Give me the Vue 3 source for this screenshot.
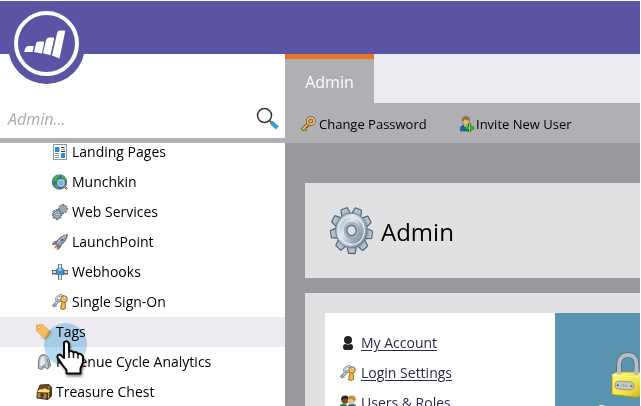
<script setup>
const items = [
  { t: 'Landing Pages', i: 'page' },
  { t: 'Munchkin', i: 'globe' },
  { t: 'Web Services', i: 'gears' },
  { t: 'LaunchPoint', i: 'rocket' },
  { t: 'Webhooks', i: 'hook' },
  { t: 'Single Sign-On', i: 'keys' },
  { t: 'Tags', i: 'tag', top: true, active: true },
  { t: 'Revenue Cycle Analytics', i: 'rca', top: true },
  { t: 'Treasure Chest', i: 'chest', top: true },
]
const links = [
  { t: 'My Account', i: 'person' },
  { t: 'Login Settings', i: 'keys' },
  { t: 'Users & Roles', i: 'users' },
]
const teeth = Array.from({ length: 9 }, (_, n) => n * 40 + 28)
const smallTeeth = Array.from({ length: 8 }, (_, n) => n * 45)
</script>

<template>
  <svg class="defs" aria-hidden="true">
    <defs>
      <linearGradient id="steel" x1="0" y1="0" x2="1" y2="1">
        <stop offset="0" stop-color="#93a4b2" /><stop offset=".35" stop-color="#e2e9ee" />
        <stop offset=".6" stop-color="#afbdc9" /><stop offset="1" stop-color="#64788c" />
      </linearGradient>
      <linearGradient id="toothfill" x1="0" y1="0" x2="0" y2="1">
        <stop offset="0" stop-color="#c6d3dc" /><stop offset="1" stop-color="#8b9fb0" />
      </linearGradient>
      <linearGradient id="yellow" x1="0" y1="0" x2="1" y2="1">
        <stop offset="0" stop-color="#fff680" /><stop offset=".6" stop-color="#f3e448" /><stop offset="1" stop-color="#c9b01c" />
      </linearGradient>
    </defs>
    <symbol id="page" viewBox="0 0 16 16">
      <rect x="1.500" y=".5" width="13" height="15" fill="#fff" stroke="#8d99a6" />
      <path d="M3 3h4.500v5H3zM9 9h4v5H9z" fill="#248fd6" />
      <path d="M9 3.500h3.500M9 7.500h4" stroke="#333" />
      <path d="M9 5.500h4M3 11.500h4" stroke="#c58a72" />
      <path d="M3 9.500h4M3 13.500h4" stroke="#69a577" />
    </symbol>
    <symbol id="globe" viewBox="0 0 16 16">
      <circle cx="7.500" cy="8" r="7.300" fill="#2873b4" stroke="#285983" stroke-width=".6" />
      <path d="M2 3Q5 0 9 1L7 3 5 4 6 6 3 8 1 7zM10 1q4 1 5 6l-3-1-2-3zM2 10l3 1 2 4q-4-1-5-5z" fill="#51a83b" />
      <path d="M11 11l4 4" stroke="#845c29" stroke-width="2.200" /><path d="M11 11l3.600 3.600" stroke="#efbd68" stroke-width="1" />
      <circle cx="9" cy="9" r="3.300" fill="#75b2dc" stroke="#d7e5ea" stroke-width="1.200" />
      <circle cx="9" cy="9" r="4" fill="none" stroke="#4c6776" stroke-width=".4" />
    </symbol>
    <symbol id="gears" viewBox="0 0 16 16">
      <g v-for="(p, k) in [[11, 5, .9], [5, 10.5, 1]]" :key="k" :transform="`translate(${p[0]} ${p[1]}) scale(${p[2]})`">
        <rect v-for="a in smallTeeth" :key="a" x="-1" y="-5" width="2" height="3" fill="#aebdc8" stroke="#405264" stroke-width=".7" :transform="`rotate(${a})`" />
        <circle r="3.500" fill="#b9c7d1" stroke="#5c6e7e" stroke-width=".8" /><circle r="1.400" fill="#eff4f6" stroke="#4c5c6c" stroke-width=".8" />
      </g>
    </symbol>
    <symbol id="rocket" viewBox="0 0 16 16">
      <path d="M5 7L1.500 8 .5 11l3-1zM9 11l-1 3-3 1.500 1-3.500z" fill="#8c9aa8" stroke="#4b5865" stroke-width=".7" />
      <path d="M4 11l-2.500 4L6 12.500z" fill="#f05b32" />
      <path d="M3.500 10Q7 2 15.500.500 14.500 8 6.500 13z" fill="#8d9dab" stroke="#475665" stroke-width=".9" />
      <path d="M5 9.500Q9 4 14 1.500" stroke="#d5dfe6" stroke-width="1" fill="none" />
      <circle cx="10" cy="6" r="1.300" fill="#386b9a" /><path d="M4 8.500l3.500 4" stroke="#b8604c" stroke-width="1" />
    </symbol>
    <symbol id="hook" viewBox="0 0 16 16">
      <path d="M6 0h4v16H6z" fill="#65727c" /><path d="M7 .5h2v15H7z" fill="#e5e6df" />
      <path d="M0 6h16v4.500H0z" fill="#56636e" /><path d="M.7 7h14.600v2H.7z" fill="#d9ddd9" />
      <path d="M4.500 5.500l3.500-2 4 2v4.500L8.500 12l-4-2z" fill="#3f93cc" stroke="#2c638c" stroke-width=".7" /><path d="M7 1h2v3.500H7zM7.200 11h2v4.500h-2z" fill="#e5e6df" />
      <path d="M5.500 5.700l2.500-1 3 1-3 1.500z" fill="#8bc9ed" />
    </symbol>
    <symbol id="keys" viewBox="0 0 16 16">
      <path d="M7 6L1 12.500" stroke="#56636b" stroke-width="2.800" /><path d="M7 6L1.500 12" stroke="#d3dce0" stroke-width="1.400" />
      <path d="M2.500 10.500l2 2" stroke="#76858d" stroke-width="1.300" />
      <ellipse cx="7.500" cy="4.200" rx="3.500" ry="2.400" transform="rotate(-35 7.500 4.200)" fill="none" stroke="#56636b" stroke-width="2" />
      <ellipse cx="7.500" cy="4.200" rx="3.500" ry="2.400" transform="rotate(-35 7.500 4.200)" fill="none" stroke="#dce3e6" />
      <path d="M10 7.500h3l.5 7L11 15.500 8 14.500l1.500-1L8.500 12l1-1z" fill="#f4bd48" stroke="#825417" stroke-width=".8" />
      <circle cx="12" cy="5" r="3.300" fill="#f4c65c" stroke="#825417" stroke-width=".8" /><circle cx="12.800" cy="3.800" r="1.200" fill="#fff" stroke="#8b6b32" stroke-width=".5" />
    </symbol>
    <symbol id="goldkey" viewBox="0 0 16 16">
      <path d="M9 7l-7 7" stroke="#704715" stroke-width="3.300" /><path d="M3 11l3.500 3.500M5.500 9l2.500 2.500" stroke="#80501a" stroke-width="2" />
      <path d="M9.500 6.500L2.500 13.500" stroke="#f5c660" stroke-width="1.700" /><path d="M3.500 11.500l2.400 2.400" stroke="#f5c660" />
      <circle cx="10.800" cy="5" r="3.300" fill="none" stroke="#704715" stroke-width="3" /><circle cx="10.800" cy="5" r="3.300" fill="none" stroke="#f3cc79" stroke-width="1.600" />
    </symbol>
    <symbol id="tag" viewBox="0 0 16 16">
      <path d="M4 13.500L10 15.500 15.500 11" fill="none" stroke="#ccc" stroke-width="1.300" />
      <path d="M.5 1L6.500.500 15.500 8.500 9 15 .5 7z" fill="#f8bd59" stroke="#e2a248" stroke-width=".8" />
      <circle cx="3" cy="3.500" r="1.200" fill="#fff" stroke="#b98038" stroke-width=".5" />
    </symbol>
    <symbol id="rca" viewBox="0 0 16 16">
      <path d="M2.500 14.500Q1.500 1 7 .500 13.500.500 14.500 12l-3 3-3-2-2.500 2.500z" fill="#b5c0ca" stroke="#5c6873" stroke-width=".9" />
      <path d="M4 12Q4 3 7 2q2 2 2 9z" fill="#e6ecf0" /><path d="M11 5q2 4 1.500 8M9 10l-3 4" stroke="#75838f" fill="none" />
    </symbol>
    <symbol id="chest" viewBox="0 0 16 16">
      <path d="M2 6L4 1l9-.5 2.500 3V12l-3.500 3.500L1 14z" fill="#53361c" stroke="#2b2018" stroke-width=".8" />
      <path d="M4 1.500l8-.5 1.500 3.500-10.500 1z" fill="#704a24" /><path d="M2 7q1-2.500 4-1.500 3-2 5 0l3 .5-1 2.500H2z" fill="#ffe46a" />
      <path d="M1 8.500l10 1V15L1 13.500z" fill="#8f602a" stroke="#39281a" stroke-width=".6" /><path d="M3 9v5M9 9.500V15M12.500 9v5M13 2v3" stroke="#d8b25e" stroke-width=".9" />
      <rect x="5" y="9.500" width="2.500" height="3" fill="#36312a" />
    </symbol>
    <symbol id="person" viewBox="0 0 16 16">
      <circle cx="8" cy="5" r="4" fill="#222" /><path d="M3 12q0-3 2.500-3 2.500 1 5 0Q13 9 13 12q0 3-2 3H5q-2 0-2-3z" fill="#222" />
    </symbol>
    <symbol id="invite" viewBox="0 0 16 16">
      <path d="M1.500 15q-1-5 3-6h4q4 1 3 6z" fill="#22659c" stroke="#234665" stroke-width=".6" /><path d="M5 9l2 4 2-4z" fill="#fff" />
      <ellipse cx="7" cy="5" rx="3.300" ry="4.300" fill="#e7bd7d" stroke="#896134" stroke-width=".7" /><path d="M3 6Q1.500 0 7 .2q4 0 4 4.300-4 0-5-1.500Q5 5 3 6z" fill="#96713d" />
      <path d="M10.500 7.500v9M6 12h9" stroke="#137318" stroke-width="3.200" /><path d="M10.500 8v8M6.700 12h7.600" stroke="#74ed42" stroke-width="1.200" />
    </symbol>
    <symbol id="users" viewBox="0 0 16 16">
      <path d="M0 16V10q3-3 7 0v6z" fill="#27834d" /><path d="M8 16v-6q4-3 8 0v6z" fill="#3176ab" />
      <circle cx="5" cy="5" r="3.800" fill="#78472e" /><path d="M1 5Q1 .5 5 .5 9 .5 9 5 5 2 1 5z" fill="#29221f" />
      <circle cx="11.500" cy="5.500" r="3.800" fill="#edc487" /><path d="M8 5Q7 .5 12 .5q4 0 4 5-4 0-5-2z" fill="#bd934c" />
    </symbol>
  </svg>

  <div class="app">
    <header class="top">
      <svg class="logo" viewBox="0 0 80 80">
        <circle cx="40.500" cy="39.500" r="38.500" fill="#5b54a4" />
        <circle cx="40.500" cy="37.500" r="30.500" fill="none" stroke="#fff" stroke-width="4" />
        <g fill="#fff">
          <path d="M18 46l1.500-4q.8-2 3-2H27q1 0 .7 1L26.500 46z" />
          <path d="M28 46l2-8.300q.5-2.200 2.700-2.200h4.600q1 0 .8 1L36 47.500z" />
          <path d="M37 47.200l3-13q.6-2.700 3-2.700h4.200q1.200 0 .9 1.200L44.500 49.300z" />
          <path d="M46 49.500L51 27.500q.6-3 3-3h4.200q1.200 0 .9 1.200L53.500 52.500z" />
        </g>
      </svg>
    </header>
    <div class="main">
      <aside>
        <div class="search">
          <span>Admin...</span>
          <svg viewBox="0 0 24 24"><circle cx="8.500" cy="8.500" r="7" fill="none" stroke="#333" stroke-width="1.500" /><path d="M13 13l3 3" stroke="#333" stroke-width="1.500" /><path d="M15.300 15.300l6 5.700" stroke="#369bd7" stroke-width="4.200" /></svg>
        </div>
        <ul class="tree">
          <li v-for="n in items" :key="n.t" :class="{ root: n.top, active: n.active }">
            <svg class="ic"><use :href="'#' + n.i" /></svg><span>{{ n.t }}</span>
          </li>
        </ul>
      </aside>
      <section class="work">
        <nav class="tabs"><div class="tab">Admin</div></nav>
        <div class="tools">
          <div class="tool"><svg class="ic"><use href="#goldkey" /></svg><span>Change Password</span></div>
          <div class="tool invite"><svg class="ic"><use href="#invite" /></svg><span>Invite New User</span></div>
        </div>
        <div class="canvas">
          <div class="title">
            <svg viewBox="0 0 44 48">
              <g transform="translate(22.500 23.500) rotate(-8) scale(.98 1.080)">
                <path v-for="a in teeth" :key="a" d="M-5-14L-3.300-21.300H3.300L5-14z" fill="url(#toothfill)" stroke="#526577" stroke-width="1.200" stroke-linejoin="round" :transform="`rotate(${a})`" />
                <circle r="16" fill="url(#steel)" stroke="#65798b" stroke-width=".8" />
                <circle r="13" fill="url(#steel)" stroke="#e4eaee" stroke-width="1.300" />
                <circle r="7.500" fill="#b0bdc8" stroke="#8d9dac" stroke-width=".8" />
                <circle r="4.800" fill="#e0e0e2" stroke="#65778a" stroke-width="1.500" />
              </g>
            </svg>
            <h1>Admin</h1>
          </div>
          <div class="panel">
            <div class="links">
              <div v-for="l in links" :key="l.t" class="link"><svg class="ic"><use :href="'#' + l.i" /></svg><a>{{ l.t }}</a></div>
            </div>
            <div class="tile">
              <svg class="lock" viewBox="0 0 34 48">
                <path d="M9 24V14Q9.500 4 18 4T26.500 14v9" fill="none" stroke="#5d6b78" stroke-width="5.600" />
                <path d="M9 24V14Q9.500 4 18 4T26.500 14v9" fill="none" stroke="#b2bdc8" stroke-width="3.800" />
                <path d="M2 23.500l4-2.500h26v22l-4 3.500-26-3z" fill="url(#yellow)" stroke="#a58b17" stroke-width=".8" stroke-linejoin="round" />
                <path d="M7 23v-6h4v6.500zM24.500 24v-7h4v7z" fill="#b2bdc8" />
                <path d="M2 24l26 2 4-5" fill="none" stroke="#fff9a4" stroke-width="1.200" />
                <rect x="5" y="30.500" width="19" height="8" rx="4" transform="rotate(4 14 35)" fill="#c1c9c5" stroke="#7e8368" stroke-width=".7" />
                <circle cx="7.800" cy="34.300" r="1" fill="#535b5f" /><circle cx="21.500" cy="35.100" r="1" fill="#535b5f" />
                <path d="M11 35.500l2-2 1 2 2-2 1 2" fill="none" stroke="#8b969d" stroke-width=".8" />
              </svg>
              <div class="tilename">Security</div>
            </div>
          </div>
        </div>
      </section>
    </div>
    <div class="halo"></div>
    <svg class="cursor" viewBox="0 0 32 40">
      <path d="M9 3.500q2.500-3 5 1v8q3-1.500 4.500 1 3-1.500 4.500 1.500 3-1 5 2.500v6l-2.500 6v5H11.500V31L7.500 26 2.500 18.500q-.5-3 2.500-3l4 3.500z" fill="#fff" stroke="#080808" stroke-width="2" stroke-linejoin="round" />
      <path d="M14 11v8M18.500 13.500v5.500M23 15v4.500" stroke="#111" stroke-width="1.500" />
    </svg>
  </div>
</template>

<style>
body { background: #fff; overflow: hidden; }
</style>
<style scoped>
* { box-sizing: border-box; }
.defs { position: absolute; width: 0; height: 0; }
.app { position: relative; width: 640px; height: 406px; padding-top: 1px; overflow: hidden; display: flex; flex-direction: column; background: #fff; font-family: "Open Sans", sans-serif; font-size: 14px; color: #000; }
.top { height: 53px; flex: none; background: #5b54a4; }
.logo { position: absolute; left: 6px; top: 6px; width: 80px; height: 80px; }
.main { display: flex; flex: 1; min-height: 0; }
aside { width: 285px; display: flex; flex-direction: column; flex: none; }
.search { height: 89px; flex: none; border-bottom: 5px solid #b0afb3; display: flex; align-items: flex-end; justify-content: space-between; padding: 0 5px 7px 8px; color: #aaa; font-size: 16px; font-style: italic; line-height: 24px; }
.search svg { width: 24px; height: 24px; }
.tree { list-style: none; margin: 0; padding: 0; flex: 1; min-height: 0; overflow: hidden; }
li { height: 30px; display: flex; align-items: center; gap: 4px; padding-left: 52px; white-space: nowrap; }
li span { padding-bottom: 2px; }
li:first-child { margin-top: -6px; }
li.root { padding-left: 36px; }
.active { background: #ecebf1; }
.ic { width: 16px; height: 16px; flex: none; }
.work { flex: 1; display: flex; flex-direction: column; min-width: 0; }
.tabs { height: 49px; flex: none; background: #ecebf1; display: flex; }
.tab { width: 89px; border-top: 5px solid #e87520; background: #b0afb3; color: #fff; font-size: 16px; line-height: 46px; text-align: center; }
.tools { height: 40px; flex: none; background: #b0afb3; display: flex; align-items: center; padding: 2px 0 0 15px; font-size: 13px; }
.tool { display: flex; align-items: center; gap: 3px; width: 159px; white-space: nowrap; }
.invite { gap: 1px; }
.canvas { flex: 1; min-height: 0; background: #9a999e; padding: 40px 0 0 20px; display: flex; flex-direction: column; gap: 15px; }
.title { height: 95px; flex: none; background: #e0e0e2; display: flex; align-items: center; padding-left: 24px; gap: 8px; }
.title svg { width: 44px; height: 48px; }
h1 { font-size: 24px; font-weight: 400; line-height: 32px; margin: 2px 0 0; }
.panel { flex: 1; min-height: 0; background: #e0e0e2; padding: 20px 0 0 20px; display: flex; }
.links { width: 230px; flex: none; background: #fff; padding: 15px 0 0 15px; overflow: hidden; }
.link { height: 30px; display: flex; align-items: center; gap: 5px; color: #282850; white-space: nowrap; }
.link a { padding-bottom: 2px; text-decoration: underline; text-underline-offset: 2px; }
.tile { flex: 1; background: #5995b1; padding: 38px 0 0 55px; overflow: hidden; color: #fff; }
.lock { width: 34px; height: 48px; display: block; }
.tilename { font-size: 18px; line-height: 24px; margin-left: -14px; }
.halo { position: absolute; left: 44px; top: 323px; width: 43px; height: 43px; border-radius: 50%; background: #b5dcf3; mix-blend-mode: multiply; }
.cursor { position: absolute; left: 55px; top: 339px; width: 32px; height: 40px; filter: drop-shadow(1px 2px 1px #0007); }
</style>
